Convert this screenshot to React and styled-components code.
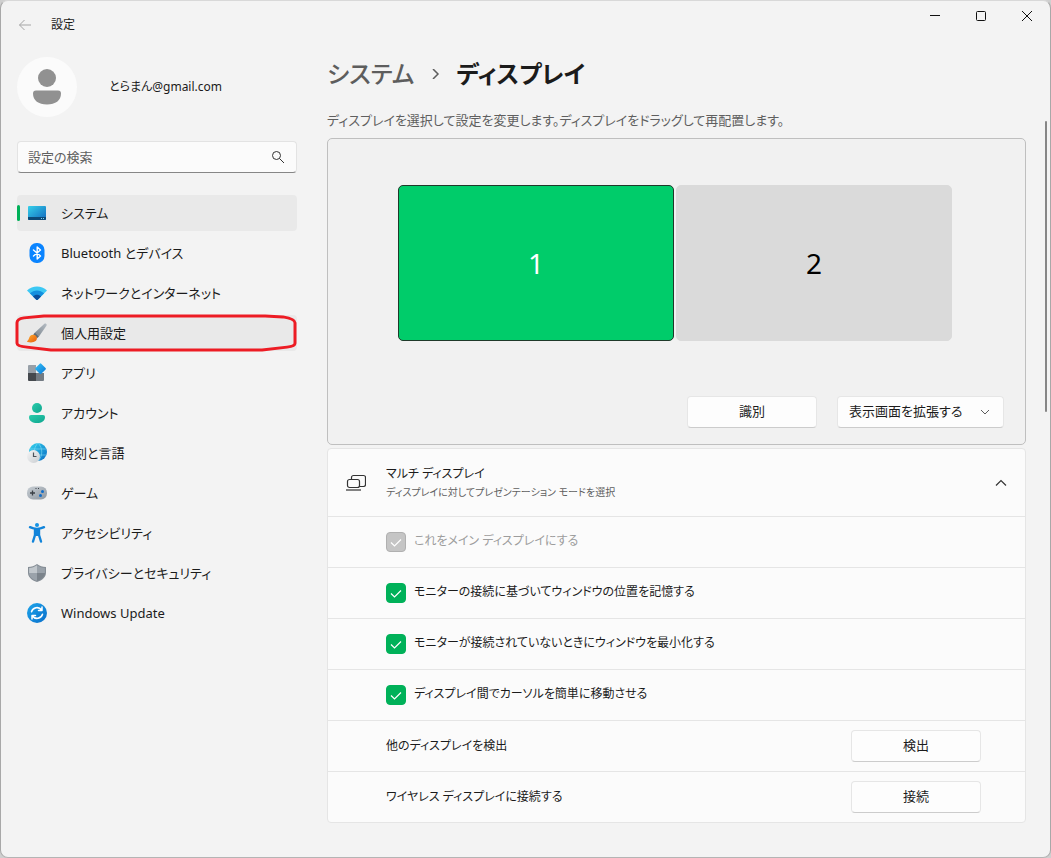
import React, { useState } from "react";
import styled, { createGlobalStyle } from "styled-components";

const GlobalStyle = createGlobalStyle`
  * {
    box-sizing: border-box;
  }
  body {
    margin: 0;
    color: #1b1b1b;
    background: #cfcfcf;
    font-family: "Noto Sans", "Noto Sans CJK JP", sans-serif;
    font-size: 13px;
    line-height: 20px;
    font-feature-settings: "palt";
  }
  button, input, select {
    font: inherit;
    font-feature-settings: inherit;
    color: inherit;
    margin: 0;
  }
`;

const Window = styled.div`
  position: relative;
  display: flex;
  flex-direction: column;
  min-height: 100vh;
  background: #f3f3f3;
  border: 1px solid #a8a8a8;
  border-top-color: #d8d8d8;
  border-bottom-color: #b4b4b4;
  border-radius: 8px;
`;

const TitleBar = styled.header`
  display: flex;
  align-items: flex-start;
  justify-content: space-between;
  height: 48px;
`;

const TitleLeft = styled.div`
  display: flex;
  align-items: center;
  gap: 18px;
  height: 47px;
  padding-left: 16px;
  font-size: 12px;
`;

const PlainButton = styled.button`
  display: grid;
  place-items: center;
  width: ${(props) => props.$width || 16}px;
  height: ${(props) => props.$height || 16}px;
  padding: 0;
  border: 0;
  background: none;
`;

const Controls = styled.div`
  display: flex;
`;

const Body = styled.div`
  display: grid;
  grid-template-columns: 280px minmax(0, 1fr);
  gap: 30px;
  padding: 0 24px 34px 16px;
`;

const Sidebar = styled.aside`
  display: flex;
  flex-direction: column;
  padding-top: 8px;
`;

const Profile = styled.div`
  display: flex;
  align-items: center;
  gap: 32px;
  font-size: 12px;
`;

const Avatar = styled.div`
  display: grid;
  place-items: center;
  width: 60px;
  height: 60px;
  border-radius: 50%;
  background: #fbfbfb;
`;

const SearchBox = styled.div`
  display: flex;
  align-items: center;
  height: 32px;
  margin: 24px 0 22px;
  padding: 0 10px;
  border: 1px solid #e3e3e3;
  border-bottom-color: #868686;
  border-radius: 4px;
  background: #fbfbfb;
`;

const SearchInput = styled.input`
  flex: 1;
  min-width: 0;
  padding: 0;
  border: 0;
  outline: 0;
  background: none;

  &::placeholder {
    color: #5f5f5f;
    opacity: 1;
  }
`;

const Nav = styled.nav`
  display: flex;
  flex-direction: column;
  gap: 4px;
`;

const NavItem = styled.a`
  position: relative;
  display: flex;
  align-items: center;
  gap: 14px;
  height: 36px;
  padding-left: 10px;
  border-radius: 4px;
  color: #1b1b1b;
  text-decoration: none;
  background: ${(props) => (props.$filled ? "#e9e9e9" : "transparent")};
`;

const ActiveMark = styled.span`
  position: absolute;
  left: 0;
  top: 10px;
  width: 3px;
  height: 16px;
  border-radius: 2px;
  background: #00b159;
`;

const Marker = styled.svg`
  position: absolute;
  left: -2px;
  top: -1px;
  width: calc(100% + 2px);
  height: 37px;
  overflow: visible;
`;

const Main = styled.main`
  min-width: 0;
`;

const Breadcrumb = styled.h1`
  display: flex;
  align-items: center;
  gap: 16px;
  margin: 7px 0 0;
  font-size: 24px;
  line-height: 36px;
  font-weight: 500;

  a {
    color: #5d5d5d;
    text-decoration: none;
  }
  strong {
    font-weight: 600;
  }
`;

const Lead = styled.p`
  margin: 18px 0 8px;
  color: #5f5f5f;
`;

const Arrange = styled.section`
  display: flex;
  flex-direction: column;
  justify-content: space-between;
  height: 307px;
  padding: 46px 21px 16px 18px;
  border: 1px solid #bfbfbf;
  border-radius: 5px;
  background: #f1f1f1;
`;

const Monitors = styled.div`
  display: flex;
  justify-content: center;
  gap: 2px;
`;

const Monitor = styled.button`
  width: 276px;
  height: 156px;
  padding: 0;
  border: 1px solid ${(props) => (props.$active ? "#1f3a2a" : "#dadada")};
  border-radius: 5px;
  font-size: 28px;
  color: ${(props) => (props.$active ? "#fff" : "#000")};
  background: ${(props) => (props.$active ? "#00cc6a" : "#dadada")};
`;

const Actions = styled.div`
  display: flex;
  justify-content: flex-end;
  gap: 20px;
`;

const Button = styled.button`
  width: 130px;
  height: 32px;
  padding: 0 0 2px;
  border: 1px solid #e6e6e6;
  border-bottom-color: #cccccc;
  border-radius: 4px;
  background: #fdfdfd;
`;

const SelectWrap = styled.div`
  display: grid;
  align-items: center;
  width: 167px;

  > * {
    grid-area: 1 / 1;
  }
  svg {
    justify-self: end;
    margin-right: 14px;
    pointer-events: none;
  }
`;

const Select = styled.select`
  appearance: none;
  width: 100%;
  height: 32px;
  padding: 0 32px 2px 11px;
  border: 1px solid #e6e6e6;
  border-bottom-color: #cccccc;
  border-radius: 4px;
  background: #fdfdfd;
`;

const Card = styled.section`
  margin-top: 3px;
  border: 1px solid #e5e5e5;
  border-radius: 4px;
  background: #fbfbfb;
  font-size: 12px;
`;

const CardHeader = styled.div`
  display: flex;
  align-items: center;
  gap: 20px;
  height: 67px;
  padding: 0 16px 0 18px;
`;

const CardTitle = styled.div`
  flex: 1;

  h2 {
    margin: 0;
    font-size: 12px;
    font-weight: 400;
    line-height: 18px;
  }
  p {
    margin: 0;
    color: #5f5f5f;
    font-size: 10px;
    line-height: 18px;
  }
`;

const Row = styled.div`
  display: flex;
  align-items: center;
  justify-content: space-between;
  height: 51px;
  padding: 0 44px 0 58px;
  border-top: 1px solid #e5e5e5;

  button {
    font-size: 13px;
  }
`;

const CheckLabel = styled.label`
  display: flex;
  align-items: center;
  gap: 8px;
  color: ${(props) => (props.$disabled ? "#9d9d9d" : "#1b1b1b")};
`;

const CheckText = styled.span`
  padding-bottom: 3px;
`;

const CheckBox = styled.span`
  display: grid;
  place-items: center;

  > * {
    grid-area: 1 / 1;
  }
  svg {
    pointer-events: none;
  }
  input {
    appearance: none;
    width: 20px;
    height: 20px;
    border: 1px solid #8a8a8a;
    border-radius: 4px;
    background: #f5f5f5;
  }
  input:checked {
    border-color: #00b159;
    background: #00b159;
  }
  input:disabled {
    border-color: #b0b0b0;
    background: #c5c5c5;
  }
`;

const ScrollThumb = styled.div`
  position: absolute;
  top: 120px;
  right: 3px;
  width: 2px;
  height: 291px;
  border-radius: 1px;
  background: #868686;
`;

const Icon = ({ size = 20, children, ...rest }) => (
  <svg width={size} height={size} viewBox={`0 0 ${size} ${size}`} fill="none" aria-hidden="true" {...rest}>
    {children}
  </svg>
);

const Gradient = ({ id, from, to, ...rest }) => (
  <linearGradient id={id} x1="0" y1="0" x2="1" y2="1" {...rest}>
    <stop stopColor={from} />
    <stop offset="1" stopColor={to} />
  </linearGradient>
);

const SystemIcon = () => (
  <Icon>
    <Gradient id="sys" from="#35d0ea" to="#1268be" />
    <rect x="1" y="3" width="18" height="14" rx="1" fill="url(#sys)" />
    <path d="M1 14h18v2a1 1 0 0 1-1 1H2a1 1 0 0 1-1-1z" fill="#0c4a78" />
    <path d="M14 15h1v1h-1zM16 15h1v1h-1z" fill="#7ed5f5" />
  </Icon>
);

const BluetoothIcon = () => (
  <Icon>
    <rect x="2.500" y="0" width="15" height="20" rx="7" fill="#0a84ff" />
    <path d="m6.500 7 7 6-3.300 3V4l3.300 3-7 6" stroke="#fff" strokeWidth="1.400" strokeLinejoin="round" strokeLinecap="round" />
  </Icon>
);

const NetworkIcon = () => (
  <Icon>
    <path d="M0 7.500C5.500 2 14.500 2 20 7.500L10.700 16.700a1 1 0 0 1-1.400 0z" fill="#3cc8f4" />
    <path d="M2.900 10.300c4-3.900 10.200-3.900 14.200 0l-6.400 6.400a1 1 0 0 1-1.400 0z" fill="#1490df" />
    <path d="M6 13.400c2.200-2.200 5.800-2.200 8 0l-3.300 3.300a1 1 0 0 1-1.400 0z" fill="#0b4f9c" />
  </Icon>
);

const BrushIcon = () => (
  <Icon>
    <Gradient id="handle" from="#7c868f" to="#b6bdc4" x1="0" y1="1" x2="1" y2="0" />
    <Gradient id="bristle" from="#ffb02e" to="#e8590c" />
    <path d="M8 9.500 17.400.800c1.300-1 2.900.5 2 1.900L12 13.500z" fill="url(#handle)" />
    <path d="m8 9.500 4 4-2 1.800-3.700-3.700z" fill="#5f6b75" />
    <path d="M3.300 12.800c1.600-1.600 4.200-1.500 5.600 0 1.500 1.600 1.300 4-.300 5.300-2 1.600-5.400 1.600-8.100.9-.6-.2-.7-.8-.1-1.100 1.700-.9 1.500-3.700 2.900-5.100z" fill="url(#bristle)" />
  </Icon>
);

const AppsIcon = () => (
  <Icon>
    <Gradient id="diamond" from="#35c3f7" to="#0a78d6" />
    <path d="M1 3a1 1 0 0 1 1-1h7v8H1z" fill="#98a0a8" />
    <path d="M1 10h8v8H2a1 1 0 0 1-1-1z" fill="#45494e" />
    <path d="M9 10h8v7a1 1 0 0 1-1 1H9z" fill="#737b83" />
    <path d="M12.800.7a1 1 0 0 1 1.400 0L18.600 5a1 1 0 0 1 0 1.400l-4.400 4.300a1 1 0 0 1-1.400 0L8.500 6.400a1 1 0 0 1 0-1.400z" fill="url(#diamond)" />
  </Icon>
);

const AccountIcon = () => (
  <Icon>
    <Gradient id="acc" from="#2accab" to="#0fa58f" />
    <circle cx="10" cy="5" r="5" fill="url(#acc)" />
    <path d="M4 12h12a2 2 0 0 1 2 2c0 4-3.500 6-8 6s-8-2-8-6a2 2 0 0 1 2-2z" fill="url(#acc)" />
  </Icon>
);

const TimeIcon = () => (
  <Icon>
    <Gradient id="globe" from="#35d5ee" to="#0a6cc4" />
    <Gradient id="clock" from="#f6f6f6" to="#c9cdd1" />
    <circle cx="11" cy="9" r="9" fill="url(#globe)" />
    <path d="M3 6h16M6 12h13M11 0c-5 5-5 13 0 18M11 0c5 5 5 13 0 18" stroke="#8be4f7" strokeWidth="0.9" opacity=".6" />
    <circle cx="6.500" cy="13.500" r="6.500" fill="url(#clock)" />
    <path d="M6.500 9.500v4h3" stroke="#4c5258" strokeWidth="1.200" />
  </Icon>
);

const GameIcon = () => (
  <Icon>
    <Gradient id="pad" from="#c8ced4" to="#8d969f" />
    <rect y="3.500" width="20" height="13" rx="6" fill="url(#pad)" />
    <path d="M5.500 7.500v5M3 10h5" stroke="#3b4046" strokeWidth="1.300" />
    <circle cx="15.500" cy="8.500" r="1.500" fill="#0f6cc9" />
    <circle cx="13.500" cy="12.500" r="1.500" fill="#0f6cc9" />
    <path d="M8.500 5.500h1M11 5.500h1" stroke="#3b4046" />
  </Icon>
);

const AccessIcon = () => (
  <Icon>
    <circle cx="10" cy="2" r="2" fill="#1593e4" />
    <path
      d="M3 4.200c2.300 1.100 4.600 1.700 7 1.700s4.700-.6 7-1.700M8 7v5L6 18.500M12 7v5l2 6.500"
      stroke="#1184da"
      strokeWidth="2.400"
      strokeLinecap="round"
      strokeLinejoin="round"
    />
    <path d="M7 6h6v7H7z" fill="#1184da" />
  </Icon>
);

const ShieldIcon = () => (
  <Icon>
    <path d="M10 1c2.500 2 5.500 3 9 3v5.500c0 4.500-3.500 7.700-9 9.500-5.500-1.800-9-5-9-9.500V4c3.500 0 6.500-1 9-3z" fill="#858d95" />
    <path d="M10 2.300c2.300 1.600 4.900 2.500 7.900 2.700V10H10zM10 10v7.800C5 16.200 2.100 13.400 2 10z" fill="#9aa2aa" />
    <path d="M10 2.300C7.700 3.900 5.100 4.800 2.100 5v5H10z" fill="#c1c7cc" />
    <path d="M10 10h7.900c-.2 3.400-3 6.200-7.900 7.800z" fill="#7b838b" />
  </Icon>
);

const UpdateIcon = () => (
  <Icon>
    <Gradient id="upd" from="#1ea5ea" to="#0a6fcb" />
    <circle cx="10" cy="10" r="10" fill="url(#upd)" />
    <path
      d="M4.500 8.800A5.700 5.700 0 0 1 14.600 7M15.500 11.200A5.700 5.700 0 0 1 5.400 13M15 4v3.500h-3.500M5 16v-3.500h3.500"
      stroke="#fff"
      strokeWidth="1.500"
      strokeLinecap="round"
      strokeLinejoin="round"
    />
  </Icon>
);

const navItems = [
  { label: "システム", icon: SystemIcon, active: true },
  { label: "Bluetooth とデバイス", icon: BluetoothIcon },
  { label: "ネットワークとインターネット", icon: NetworkIcon },
  { label: "個人用設定", icon: BrushIcon, marked: true },
  { label: "アプリ", icon: AppsIcon },
  { label: "アカウント", icon: AccountIcon },
  { label: "時刻と言語", icon: TimeIcon },
  { label: "ゲーム", icon: GameIcon },
  { label: "アクセシビリティ", icon: AccessIcon },
  { label: "プライバシーとセキュリティ", icon: ShieldIcon },
  { label: "Windows Update", icon: UpdateIcon },
];

const checkOptions = [
  { id: "main", label: "これをメイン ディスプレイにする", disabled: true },
  { id: "remember", label: "モニターの接続に基づいてウィンドウの位置を記憶する" },
  { id: "minimize", label: "モニターが接続されていないときにウィンドウを最小化する" },
  { id: "cursor", label: "ディスプレイ間でカーソルを簡単に移動させる" },
];

const actionRows = [
  { label: "他のディスプレイを検出", action: "検出" },
  { label: "ワイヤレス ディスプレイに接続する", action: "接続" },
];

const App = () => {
  const [checked, setChecked] = useState({
    main: true,
    remember: true,
    minimize: true,
    cursor: true,
  });

  const toggle = (id) => setChecked({ ...checked, [id]: !checked[id] });

  return (
    <>
      <GlobalStyle />
      <Window>
        <TitleBar>
          <TitleLeft>
            <PlainButton aria-label="戻る">
              <Icon size={16}>
                <path d="M14 8H2.500M7.500 3l-5 5 5 5" stroke="#a5a5a5" />
              </Icon>
            </PlainButton>
            <span>設定</span>
          </TitleLeft>
          <Controls>
            <PlainButton $width={46} $height={30} aria-label="最小化">
              <Icon size={10}>
                <path d="M0 4.500h10" stroke="#111" />
              </Icon>
            </PlainButton>
            <PlainButton $width={46} $height={30} aria-label="最大化">
              <Icon size={10}>
                <rect x=".5" y=".5" width="9" height="9" rx="1" stroke="#111" />
              </Icon>
            </PlainButton>
            <PlainButton $width={46} $height={30} aria-label="閉じる">
              <Icon size={10}>
                <path d="m0 0 10 10M10 0 0 10" stroke="#111" />
              </Icon>
            </PlainButton>
          </Controls>
        </TitleBar>

        <Body>
          <Sidebar>
            <Profile>
              <Avatar>
                <svg width="30" height="36" viewBox="0 0 30 36" fill="#919191" aria-hidden="true">
                  <circle cx="15" cy="9" r="9" />
                  <path d="M4 21.500h22a3 3 0 0 1 3 3c0 7-5.500 11-14 11s-14-4-14-11a3 3 0 0 1 3-3z" />
                </svg>
              </Avatar>
              <span>とらまん@gmail.com</span>
            </Profile>
            <SearchBox>
              <SearchInput type="text" placeholder="設定の検索" aria-label="設定の検索" />
              <Icon size={16}>
                <circle cx="6.500" cy="6.500" r="4" stroke="#333" />
                <path d="m9.500 9.500 4.500 4.500" stroke="#333" />
              </Icon>
            </SearchBox>
            <Nav>
              {navItems.map((item) => (
                <NavItem key={item.label} href="#" $filled={item.active || item.marked}>
                  {item.active && <ActiveMark />}
                  <item.icon />
                  <span>{item.label}</span>
                  {item.marked && (
                    <Marker viewBox="0 0 283 38" preserveAspectRatio="none" fill="none" aria-hidden="true">
                      <path
                        d="M2 30V9q0-4 7-5l20-2h222l18 1q12 2 12 6v21q0 3-8 4l-25 3H36L12 34q-10-1-10-4z"
                        stroke="#ed1c24"
                        strokeWidth="3"
                        strokeLinejoin="round"
                      />
                    </Marker>
                  )}
                </NavItem>
              ))}
            </Nav>
          </Sidebar>

          <Main>
            <Breadcrumb>
              <a href="#">システム</a>
              <Icon size={10}>
                <path d="m3 0 5 5-5 5" stroke="#5d5d5d" strokeWidth="1.500" />
              </Icon>
              <strong>ディスプレイ</strong>
            </Breadcrumb>
            <Lead>ディスプレイを選択して設定を変更します。ディスプレイをドラッグして再配置します。</Lead>

            <Arrange>
              <Monitors>
                <Monitor $active>1</Monitor>
                <Monitor>2</Monitor>
              </Monitors>
              <Actions>
                <Button>識別</Button>
                <SelectWrap>
                  <Select aria-label="表示モード">
                    <option>表示画面を拡張する</option>
                    <option>表示画面を複製する</option>
                  </Select>
                  <Icon size={10}>
                    <path d="m1 3 4 4 4-4" stroke="#5d5d5d" />
                  </Icon>
                </SelectWrap>
              </Actions>
            </Arrange>

            <Card>
              <CardHeader>
                <Icon>
                  <rect x="5.500" y="2.500" width="14" height="11" rx="2" stroke="#333" strokeWidth="1.200" />
                  <rect x="1.500" y="6.500" width="12" height="8" rx="2" fill="#fbfbfb" stroke="#333" strokeWidth="1.200" />
                  <path d="M0 17h15" stroke="#333" strokeWidth="1.200" />
                </Icon>
                <CardTitle>
                  <h2>マルチ ディスプレイ</h2>
                  <p>ディスプレイに対してプレゼンテーション モードを選択</p>
                </CardTitle>
                <PlainButton aria-label="折りたたむ">
                  <Icon size={12}>
                    <path d="m1 8.500 5-5 5 5" stroke="#333" strokeWidth="1.200" />
                  </Icon>
                </PlainButton>
              </CardHeader>
              {checkOptions.map((option) => (
                <Row key={option.id}>
                  <CheckLabel $disabled={option.disabled}>
                    <CheckBox>
                      <input
                        type="checkbox"
                        checked={checked[option.id]}
                        disabled={option.disabled}
                        onChange={() => toggle(option.id)}
                      />
                      {checked[option.id] && (
                        <Icon size={12}>
                          <path d="m1 6.500 3.500 3.500L11 3.500" stroke="#fff" strokeWidth="1.200" />
                        </Icon>
                      )}
                    </CheckBox>
                    <CheckText>{option.label}</CheckText>
                  </CheckLabel>
                </Row>
              ))}
              {actionRows.map((row) => (
                <Row key={row.action}>
                  <span>{row.label}</span>
                  <Button>{row.action}</Button>
                </Row>
              ))}
            </Card>
          </Main>
        </Body>
        <ScrollThumb />
      </Window>
    </>
  );
};

export default App;
